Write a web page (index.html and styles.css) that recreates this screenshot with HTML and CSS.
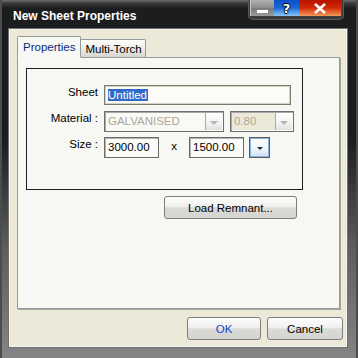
FILE: index.html
```html
<!DOCTYPE html>
<html lang="en">
<head>
    <meta charset="UTF-8">
    <title>New Sheet Properties</title>
    <link rel="stylesheet" href="styles.css">
</head>
<body>
    <div class="window">
        <div class="titlebar">
            <span class="title">New Sheet Properties</span>
            <div class="caption-buttons">
                <div class="cap-btn cap-min"><span class="min-bar"></span></div>
                <div class="cap-btn cap-help">?</div>
                <div class="cap-btn cap-close">
                    <svg width="14" height="11" viewBox="0 0 14 11">
                        <path d="M2 1 L12 10 M12 1 L2 10" stroke="#fff" stroke-width="2.6" fill="none"/>
                    </svg>
                </div>
            </div>
        </div>

        <div class="client">
            <div class="tabs">
                <div class="tab tab-active">Properties</div>
                <div class="tab">Multi-Torch</div>
            </div>

            <div class="panel">
                <div class="panel-body">
                    <div class="group">
                        <div class="form-grid">
                            <label class="field-label">Sheet</label>
                            <div class="row">
                                <div class="textbox textbox-sheet"><span class="selected-text">Untitled</span></div>
                            </div>

                            <label class="field-label">Material :</label>
                            <div class="row">
                                <div class="combo combo-material">
                                    <span class="combo-text">GALVANISED</span>
                                    <span class="combo-arrow"><i class="arrow arrow-light"></i></span>
                                </div>
                                <div class="combo combo-gauge">
                                    <span class="combo-text">0.80</span>
                                    <span class="combo-arrow"><i class="arrow arrow-light"></i></span>
                                </div>
                            </div>

                            <label class="field-label">Size :</label>
                            <div class="row">
                                <div class="textbox textbox-size">3000.00</div>
                                <span class="times">x</span>
                                <div class="textbox textbox-size">1500.00</div>
                                <div class="size-button"><i class="arrow arrow-dark"></i></div>
                            </div>
                        </div>
                    </div>

                    <div class="remnant-row">
                        <button class="xp-button btn-remnant">Load Remnant...</button>
                    </div>
                </div>
            </div>

            <div class="footer">
                <button class="xp-button btn-ok">OK</button>
                <button class="xp-button btn-cancel">Cancel</button>
            </div>
        </div>
    </div>
</body>
</html>
```

FILE: styles.css
```css
body {
    margin: 0;
    padding: 0;
    font-family: "Liberation Sans", Arial, sans-serif;
    font-size: 11px;
    background-color: #1c1d1f;
}

.window {
    width: 358px;
    height: 358px;
    box-sizing: border-box;
    background: linear-gradient(to bottom, #6e6e6e 0, #3b3c3e 3px, #1c1d1f 8px, #1c1d1f 140px, #5e5e5e 250px, #848484 358px);
    box-shadow: inset 2px 0 0 #4c4c4c, inset -2px 0 0 #4c4c4c;
}

/* Barra de titulo */
.titlebar {
    height: 28px;
    display: flex;
    justify-content: space-between;
    align-items: flex-start;
}

.title {
    padding: 9px 0 0 13px;
    color: #fff;
    font-weight: bold;
    font-size: 12px;
    line-height: 14px;
}

.caption-buttons {
    display: flex;
    margin-right: 14px;
    padding: 0 1px 3px 1px;
    background-color: #3a3b3d;
    border: 1px solid #5a5a5a;
    border-top: none;
    border-radius: 0 0 5px 5px;
}

.cap-btn {
    height: 16px;
    display: flex;
    align-items: center;
    justify-content: center;
    box-sizing: border-box;
}

.cap-min {
    width: 24px;
    background: linear-gradient(to bottom, #b0b0b0, #8a8a8a 50%, #7a7a7a 51%, #9c9c9c);
    border-left: 1px solid #c8c8c8;
}

.min-bar {
    width: 11px;
    height: 3px;
    margin-top: 6px;
    background-color: #fff;
}

.cap-help {
    width: 25px;
    color: #fff;
    font-weight: bold;
    font-size: 13px;
    font-family: "DejaVu Sans", sans-serif;
    text-shadow: 1px 0 0 #000, -1px 0 0 #000, 0 1px 0 #000, 0 -1px 0 #000;
    background: linear-gradient(to bottom, #0d4fc8, #1b66d8 50%, #4b93e6 70%, #8cc4f4);
}

.cap-close {
    width: 43px;
    background: linear-gradient(to bottom, #b81200, #d22a06 50%, #e4582a 70%, #f39a5c);
    border-right: 1px solid #7a3a20;
}

/* Area do cliente */
.client {
    margin-left: 8px;
    width: 340px;
    height: 320px;
    box-sizing: border-box;
    border: 1px solid #707070;
    box-shadow: inset 1px 1px 0 #f4f3ee, inset -1px -1px 0 #f4f3ee;
    background-color: #ece9d8;
    padding: 8px 0 0 8px;
}

.tabs {
    display: flex;
    align-items: flex-end;
    height: 21px;
    position: relative;
    z-index: 2;
}

.tab {
    height: 18px;
    box-sizing: border-box;
    padding: 3px 3px 0 4px;
    margin-left: -1px;
    margin-bottom: 1px;
    border: 1px solid #919b9c;
    border-bottom: none;
    border-radius: 2px 2px 0 0;
    background: linear-gradient(to bottom, #fefefe, #f0f0ea 40%, #d6d6d0);
    color: #000;
    font-size: 11.5px;
}

.tab-active {
    margin-left: 0;
    height: 22px;
    margin-bottom: 0;
    padding: 4px 5px 0 5px;
    background: #f7f7f4;
    color: #0a2a78;
    z-index: 3;
    position: relative;
    border-bottom: 1px solid #f7f7f4;
}

.panel {
    width: 323px;
    height: 252px;
    margin-top: -1px;
    box-sizing: border-box;
    border: 1px solid #919b9c;
    background-color: #f7f7f4;
    box-shadow: 1px 1px 0 #aca899;
}

.panel-body {
    width: 277px;
    padding: 10px 0 0 8px;
}

.group {
    height: 122px;
    box-sizing: border-box;
    border: 1px solid #1f1f1f;
    padding: 16px 0 0 0;
}

.form-grid {
    display: grid;
    grid-template-columns: 71px auto;
    column-gap: 6px;
    row-gap: 5px;
}

.field-label {
    text-align: right;
    line-height: 13px;
    padding-top: 1px;
    font-size: 11.5px;
    color: #000;
}

.row {
    display: flex;
    align-items: flex-start;
    height: 21px;
}

.textbox {
    box-sizing: border-box;
    border: 1px solid #7b7b6e;
    box-shadow: inset 1px 1px 0 #d4d0c4, inset -1px -1px 0 #d4d0c4;
    background-color: #fbfbf8;
    font-size: 11.5px;
    line-height: 17px;
    padding: 0 3px;
    color: #000;
}

.textbox-sheet {
    width: 187px;
    height: 20px;
    padding-top: 1px;
    line-height: 16px;
}

.selected-text {
    background-color: #316ac5;
    color: #fff;
    padding: 0 1px 0 0;
}

.textbox-size {
    width: 55px;
    height: 21px;
    border-color: #6a6a6a;
    box-shadow: inset 1px 1px 0 #b4b4b4;
    padding-top: 1px;
}

.times {
    width: 30px;
    text-align: center;
    line-height: 18px;
    font-size: 11.5px;
}

.combo {
    display: flex;
    height: 21px;
    box-sizing: border-box;
    border: 1px solid #6f6f6f;
    box-shadow: inset 1px 1px 0 #a8a8a8;
    background-color: #f9f9f6;
    padding: 1px;
}

.combo-material {
    width: 120px;
    margin-right: 6px;
}

.combo-gauge {
    width: 64px;
}

.combo-gauge .combo-text {
    background-color: #ece9d8;
}

.combo-text {
    flex: 1;
    color: #aca899;
    font-size: 11.5px;
    line-height: 17px;
    padding-left: 2px;
}

.combo-arrow {
    width: 16px;
    display: flex;
    align-items: center;
    justify-content: center;
    border-left: 1px solid #a9a9a9;
    background: linear-gradient(to bottom, #ffffff, #f3f3f3 60%, #e2e2e2);
}

.arrow {
    width: 0;
    height: 0;
    border-left: 4px solid transparent;
    border-right: 4px solid transparent;
    margin-top: 2px;
}

.arrow-light {
    border-top: 4px solid #b4b4b4;
}

.arrow-dark {
    border-left-width: 3px;
    border-right-width: 3px;
    border-top: 3px solid #2a2a2a;
}

.size-button {
    width: 21px;
    height: 21px;
    margin-left: 5px;
    box-sizing: border-box;
    border: 1px solid #5a5a5a;
    box-shadow: inset 0 0 0 1px #8ab4dc;
    background: linear-gradient(to bottom, #ffffff, #eef4fa 55%, #cfe0f2);
    display: flex;
    align-items: center;
    justify-content: center;
}

.remnant-row {
    display: flex;
    justify-content: flex-end;
    padding: 6px 6px 0 0;
}

/* Botoes estilo XP */
.xp-button {
    height: 23px;
    box-sizing: border-box;
    border: 1px solid #7d7d7d;
    border-radius: 3px;
    background: linear-gradient(to bottom, #fdfdfd, #f0f0ee 45%, #dadad6 52%, #d4d4d0);
    font-family: "Liberation Sans", Arial, sans-serif;
    font-size: 11.5px;
    color: #000;
    padding: 0;
}

.btn-remnant {
    width: 133px;
}

.footer {
    display: flex;
    justify-content: flex-end;
    gap: 6px;
    margin-top: 8px;
    padding-right: 4px;
}

.btn-ok {
    width: 74px;
    color: #1646d6;
}

.btn-cancel {
    width: 76px;
}
```
